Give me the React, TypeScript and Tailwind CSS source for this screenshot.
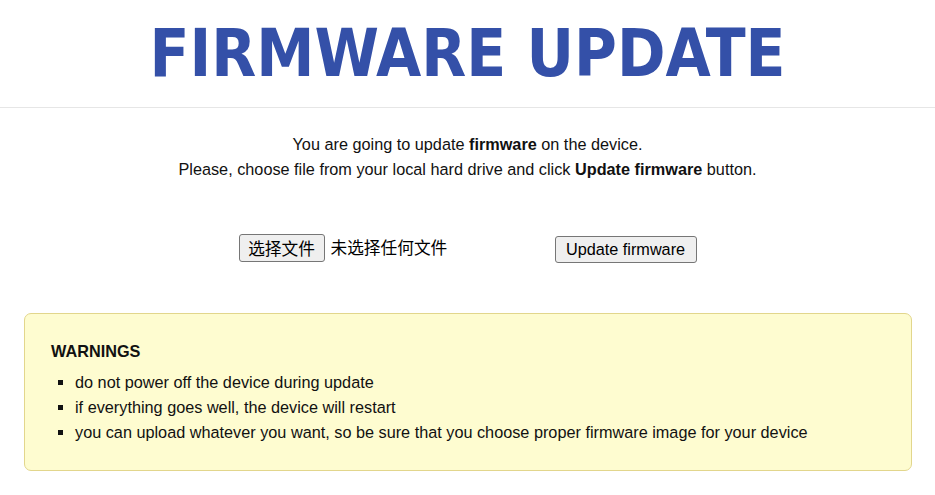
export default function App() {
  return (
    <div className="min-h-[495px] bg-white text-[#111] font-['Liberation_Sans',Arial,sans-serif]">
      {/* header */}
      <div className="h-[108px] flex items-center justify-center border-b border-[#e6e6e6]">
        <h1 className="text-[65px] leading-none font-bold text-[#3450a8] font-['DejaVu_Sans_Condensed','DejaVu_Sans',sans-serif]">
          FIRMWARE UPDATE
        </h1>
      </div>

      <div className="pt-[24px] text-center text-[16.25px] leading-[25px]">
        <p>
          You are going to update <b>firmware</b> on the device.
        </p>
        <p>
          Please, choose file from your local hard drive and click <b>Update firmware</b> button.
        </p>
      </div>

      {/* upload row */}
      <div className="mt-[51px] flex items-center justify-center">
        <div className="w-[316px] flex items-center">
          <button className="h-[28px] w-[86px] px-[4px] bg-[#efefef] border border-[#767676] rounded-[3px] text-[16.7px] text-black font-['Noto_Sans_CJK_SC',sans-serif] leading-none">
            选择文件
          </button>
          <span className="ml-[6px] text-[16.7px] text-black font-['Noto_Sans_CJK_SC',sans-serif]">未选择任何文件</span>
        </div>
        <button className="h-[27px] w-[142px] mt-[3px] bg-[#efefef] border border-[#767676] rounded-[3px] text-[16.25px] text-black leading-none">
          Update firmware
        </button>
      </div>

      {/* warnings */}
      <div className="mt-[50px] mx-[24px] mr-[23px] rounded-[7px] border border-[#e2d68c] bg-[#fefcd0] pl-[26px] pt-[25px] pb-[25px] text-[16.25px] leading-[25px]">
        <div className="font-bold">WARNINGS</div>
        <ul className="mt-[6px] list-[square] pl-[24px]">
          <li>do not power off the device during update</li>
          <li>if everything goes well, the device will restart</li>
          <li>you can upload whatever you want, so be sure that you choose proper firmware image for your device</li>
        </ul>
      </div>
    </div>
  );
}
